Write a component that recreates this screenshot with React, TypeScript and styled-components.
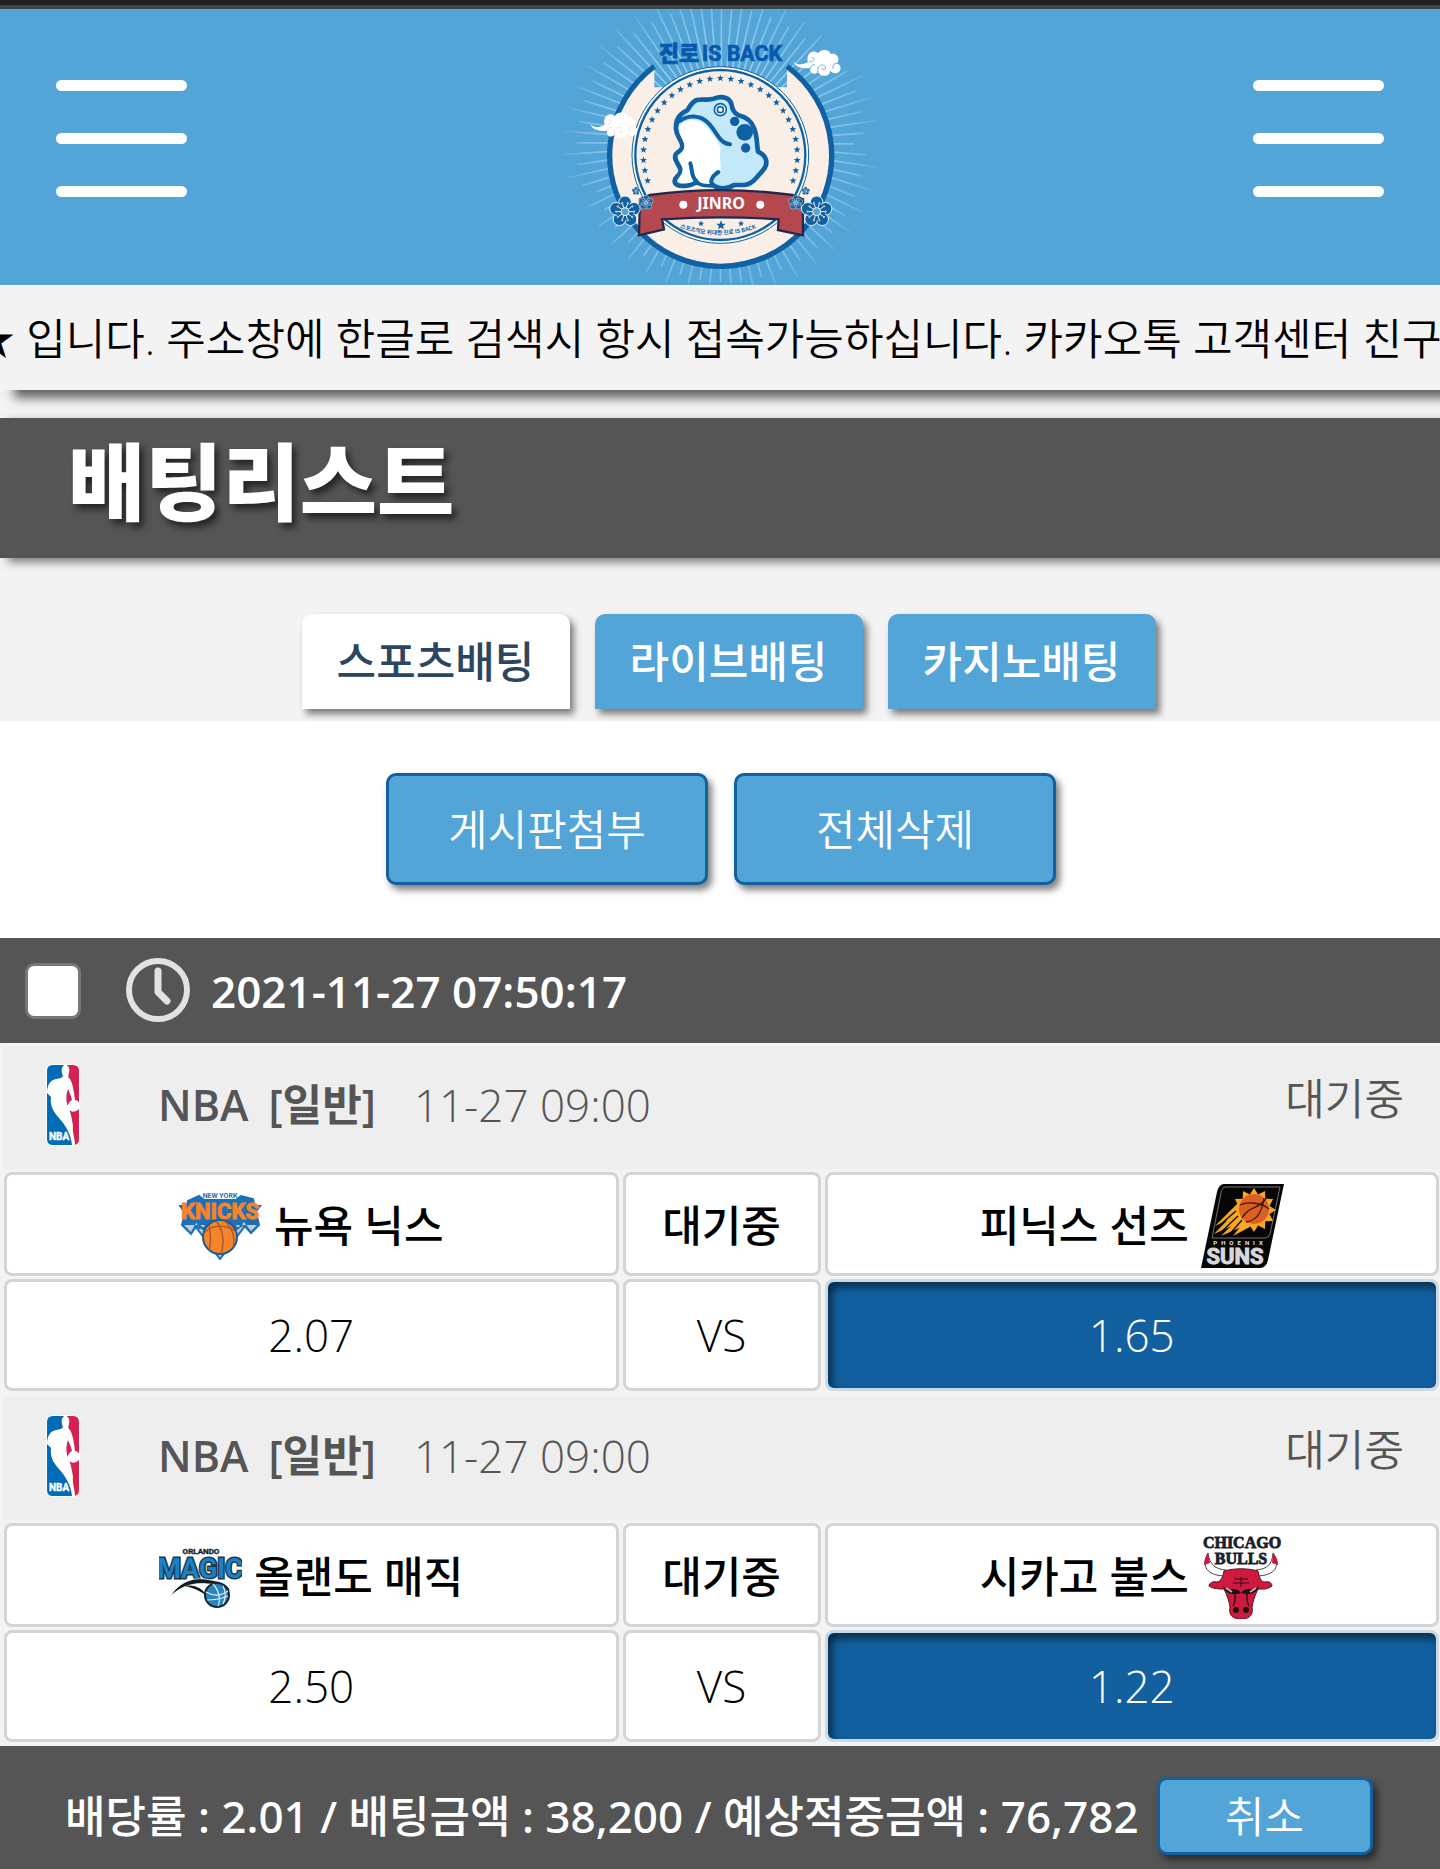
import React, { useState } from 'react';
import styled, { createGlobalStyle, css } from 'styled-components';

const color = {
  sky: '#53a4d7',
  deep: '#12609f',
  slate: '#555555',
  page: '#f3f3f3',
  row: '#eeeeee',
  line: '#d4d4d4',
};

const GlobalStyle = createGlobalStyle`
  *, *::before, *::after { box-sizing: border-box; }
  body {
    margin: 0;
    background: ${color.page};
    color: #000;
    font-family: 'Open Sans', 'Noto Sans CJK KR', sans-serif;
    font-size: 43px;
    font-weight: 350;
    line-height: 64px;
  }
  button, input { font: inherit; }
`;

const raised = css`
  box-shadow: 4px 5px 7px rgba(0, 0, 0, 0.5);
`;

/* ---------- header ---------- */

const StatusStrip = styled.div`
  height: 9px;
  background: #202020;
  border-bottom: 4px solid #3f4549;
`;

const Header = styled.header`
  display: flex;
  align-items: center;
  justify-content: space-between;
  height: 276px;
  padding: 0 56px;
  background: ${color.sky};
`;

const MenuButton = styled.button`
  display: flex;
  flex-direction: column;
  gap: 42px;
  width: 131px;
  padding: 0;
  margin-bottom: 18px;
  border: 0;
  background: none;
  cursor: pointer;
`;

const MenuBar = styled.span`
  height: 11px;
  border-radius: 6px;
  background: #fff;
`;

const LogoLink = styled.a`
  display: block;
  height: 276px;
`;

/* ---------- notice and title ---------- */

const Notice = styled.div`
  height: 105px;
  background: ${color.page};
  box-shadow: 12px 10px 10px -2px rgba(0, 0, 0, 0.6);
`;

const NoticeText = styled.p`
  margin: 0;
  overflow: hidden;
  white-space: nowrap;
  text-indent: -28px;
  line-height: 108px;
`;

const TitleBar = styled.div`
  margin-top: 28px;
  padding: 0 68px;
  height: 140px;
  background: ${color.slate};
  box-shadow: 8px 4px 9px rgba(0, 0, 0, 0.5);
`;

const Title = styled.h1`
  margin: 0;
  color: #fff;
  font-family: 'Noto Sans CJK KR', sans-serif;
  font-size: 84px;
  font-weight: 900;
  line-height: 120px;
  text-shadow: 4px 5px 7px rgba(0, 0, 0, 0.6);
`;

/* ---------- tabs and actions ---------- */

const Tabs = styled.nav`
  display: flex;
  justify-content: center;
  gap: 25px;
  padding: 56px 0 12px 17px;
`;

const Tab = styled.button<{ $active: boolean }>`
  width: 268px;
  height: 95px;
  padding: 0;
  border: 0;
  border-radius: 10px 10px 0 0;
  background: ${(p) => (p.$active ? '#fff' : color.sky)};
  color: ${(p) => (p.$active ? '#2c4560' : '#fff')};
  font-weight: 500;
  cursor: pointer;
  ${raised}
`;

const Actions = styled.div`
  display: flex;
  justify-content: center;
  gap: 26px;
  padding: 52px 0 53px 2px;
  background: #fff;
`;

const ActionButton = styled.button<{ $compact?: boolean }>`
  width: ${(p) => (p.$compact ? 216 : 322)}px;
  height: ${(p) => (p.$compact ? 78 : 112)}px;
  padding: 2px 0 0;
  border: 3px solid ${color.deep};
  border-radius: 10px;
  background: ${color.sky};
  color: #fff;
  cursor: pointer;
  ${raised}
`;

/* ---------- bet slip ---------- */

const SlipHeader = styled.div`
  display: flex;
  align-items: center;
  height: 105px;
  padding-left: 25px;
  background: ${color.slate};
  color: #fff;
`;

const Check = styled.input`
  appearance: none;
  width: 56px;
  height: 56px;
  margin: 0 45px 0 0;
  border: 3px solid #777;
  border-radius: 9px;
  background: #fff;
  &:checked { background: ${color.sky}; }
`;

const SlipTime = styled.label`
  display: flex;
  align-items: center;
  gap: 19px;
  font-size: 44px;
  font-weight: 600;
`;

const LeagueRow = styled.div`
  display: flex;
  align-items: center;
  margin: 3px 0 0 3px;
  padding: 18px 36px 23px 43px;
  background: ${color.row};
  color: ${color.slate};
`;

const LeagueName = styled.strong`
  margin-left: 78px;
  font-weight: 600;
`;

const LeagueKind = styled.strong`
  margin-left: 20px;
  font-weight: 600;
`;

const LeagueTime = styled.time`
  margin-left: 38px;
  font-size: 44px;
`;

const LeagueStatus = styled.span`
  align-self: flex-start;
  margin-left: auto;
  line-height: 70px;
`;

const OddsTable = styled.table`
  width: calc(100% + 3px);
  table-layout: fixed;
  border-collapse: separate;
  border-spacing: 4px 3px;
`;

const cell = css`
  padding: 0;
  border: 3px solid ${color.line};
  border-radius: 8px;
  background: #fff;
  text-align: center;
`;

const TeamCell = styled.th<{ $middle?: boolean }>`
  ${cell}
  width: ${(p) => (p.$middle ? '198px' : 'auto')};
  height: 104px;
  padding-top: 3px;
  font-weight: 500;
`;

const Team = styled.span`
  display: flex;
  align-items: center;
  justify-content: center;
  gap: 12px;
`;

const OddsCell = styled.td<{ $picked?: boolean }>`
  ${cell}
  height: 112px;
  font-size: 44px;
  ${(p) =>
    p.$picked &&
    css`
      border-color: #cbd9e4;
      background: ${color.deep};
      background-clip: padding-box;
      color: #fff;
      box-shadow: inset 4px 5px 8px rgba(0, 0, 0, 0.55);
    `}
`;

const SlipFooter = styled.footer`
  display: flex;
  align-items: center;
  gap: 18px;
  margin-top: 1px;
  height: 140px;
  padding-left: 65px;
  background: ${color.slate};
  color: #fff;
`;

const Summary = styled.p`
  margin: 0;
  font-family: 'Noto Sans', 'Noto Sans CJK KR', sans-serif;
  font-size: 44px;
  font-weight: 500;
  white-space: nowrap;
`;

const Screen = styled.div`
  overflow: hidden;
`;

/* ---------- drawings ---------- */

const INK = '#1060a4';
const block = "Roboto, 'Liberation Sans', sans-serif";

const starPoints = (cx: number, cy: number, r: number) =>
  Array.from({ length: 10 }, (_, i) => {
    const a = (-90 + i * 36) * (Math.PI / 180);
    const d = i % 2 ? r * 0.42 : r;
    return `${(cx + d * Math.cos(a)).toFixed(1)},${(cy + d * Math.sin(a)).toFixed(1)}`;
  }).join(' ');

function Flower({ x, y, r }: { x: number; y: number; r: number }) {
  const spots = [0, 1, 2, 3, 4].map((i) => (-90 + i * 72) * (Math.PI / 180));
  return (
    <g transform={`translate(${x} ${y}) scale(${r / 45})`}>
      {spots.map((a, i) => (
        <circle key={i} cx={28 * Math.cos(a)} cy={28 * Math.sin(a)} r="19" fill={INK} stroke="#e9f4fb" strokeWidth="3" />
      ))}
      <circle r="26" fill={INK} />
      {Array.from({ length: 10 }, (_, i) => i * 36 * (Math.PI / 180)).map((a, i) => (
        <g key={i} stroke="#f5f3ee" strokeWidth="3">
          <line x1={10 * Math.cos(a)} y1={10 * Math.sin(a)} x2={25 * Math.cos(a)} y2={25 * Math.sin(a)} />
          <circle cx={27 * Math.cos(a)} cy={27 * Math.sin(a)} r="2" />
        </g>
      ))}
      <circle r="12" fill={color.sky} stroke="#f5f3ee" strokeWidth="3" />
    </g>
  );
}

function Cloud({ x, y, swirl }: { x: number; y: number; swirl: string }) {
  return (
    <g transform={`translate(${x} ${y})`}>
      <path
        fill="#fff"
        d="M0 30 C12 46 30 42 46 34 C38 8 62 -6 76 8 C86 -8 112 -4 114 10 C136 6 144 28 132 38 C150 44 146 66 130 68 C122 68 116 64 112 60 C112 80 84 80 76 64 C64 76 48 66 54 52 C36 54 12 54 0 30 Z"
      />
      <g fill="none" stroke={swirl} strokeWidth="2.5" strokeLinecap="round">
        <path d="M50 34 C64 36 70 20 58 20" />
        <path d="M76 64 C70 46 90 36 98 48 C102 58 88 62 88 52" />
        <path d="M132 38 C122 38 118 46 122 54" />
        <path d="M66 42 C58 42 54 46 54 52" />
      </g>
    </g>
  );
}

function JinroLogo() {
  return (
    <svg width="360" height="276" viewBox="0 27 1080 828" role="img" aria-label="진로 IS BACK">
      <defs>
        <radialGradient id="rayFade" gradientUnits="userSpaceOnUse" cx="543" cy="430" r="478">
          <stop offset="0.6" stopColor="#a5d3f0" stopOpacity="0.8" />
          <stop offset="0.85" stopColor="#a5d3f0" stopOpacity="0.5" />
          <stop offset="1" stopColor="#a5d3f0" stopOpacity="0.1" />
        </radialGradient>
        <path id="mottoArc" d="M420 683 Q543 728 668 678" />
      </defs>
      <g stroke="url(#rayFade)">
        {Array.from({ length: 84 }, (_, i) => {
          const a = (i * (360 / 84) + 0.2) * (Math.PI / 180);
          const reach = 400 + ((i * 37) % 76);
          return (
            <line
              key={i}
              x1={543 + 190 * Math.cos(a)}
              y1={430 + 190 * Math.sin(a)}
              x2={543 + reach * Math.cos(a)}
              y2={430 + reach * Math.sin(a)}
              strokeWidth="5"
            />
          );
        })}
      </g>
      <path
        d="M343 199 A333 333 0 1 0 741 199 L741 262 L706 262 A265 265 0 0 0 376 262 L343 262 Z"
        fill="#faefe6"
      />
      <path d="M343 199 A333 333 0 1 0 741 199" fill="none" stroke={INK} strokeWidth="16" />
      <circle cx="541" cy="465" r="265" fill="#fff" stroke={INK} strokeWidth="3" />
      <circle cx="541" cy="465" r="255" fill="#faefe6" stroke={INK} strokeWidth="7" />
      <g fill="#0759ae" stroke="#0759ae" strokeWidth="2">
        <text x="356" y="184" fontFamily="'Noto Sans CJK KR', sans-serif" fontWeight="900" fontSize="66">진로</text>
        <text x="486" y="182" fontFamily={block} fontWeight="700" fontSize="64">IS BACK</text>
      </g>
      {Array.from({ length: 29 }, (_, i) => {
        const a = (-90 + (i - 14) * 7.8) * (Math.PI / 180);
        return <polygon key={i} fill={INK} points={starPoints(541 + 231 * Math.cos(a), 466 + 231 * Math.sin(a), 11)} />;
      })}
      <path
        d="M408 388 C406 358 420 340 442 331 C450 318 456 305 470 300 C488 296 506 302 522 296 C545 286 570 292 575 314 C576 328 584 340 596 346 C622 352 636 366 643 386 C652 410 650 432 654 455 C682 468 686 492 668 512 C650 532 636 554 612 555 L582 555 C566 566 536 570 520 556 C504 556 490 556 478 550 C466 542 456 558 440 557 C420 560 398 556 406 536 C412 526 426 522 420 504 C412 488 400 476 408 462 C416 452 430 452 426 432 C420 414 410 408 408 388 Z"
        fill="#c3e8fa"
        stroke={INK}
        strokeWidth="14"
        strokeLinejoin="round"
      />
      <path
        d="M418 378 C440 352 476 354 500 382 C520 406 538 428 542 446 C536 466 544 492 542 514 C522 524 514 538 510 552 C490 552 478 548 468 536 C456 552 436 552 414 546 C412 530 430 526 428 504 C422 486 410 476 414 466 C428 458 436 448 432 430 C426 412 416 402 418 378 Z"
        fill="#fff"
      />
      <g fill="none" stroke={INK} strokeWidth="12" strokeLinecap="round">
        <path d="M414 366 C444 342 482 344 506 370 C532 398 540 432 570 433" />
        <path d="M451 490 C458 510 452 530 470 544" />
        <path d="M535 516 C514 530 508 546 520 556" />
      </g>
      <circle cx="541" cy="329" r="18" fill="#fff" stroke={INK} strokeWidth="5" />
      <circle cx="541" cy="329" r="9" fill="none" stroke={INK} strokeWidth="5" />
      <g fill={INK}>
        <circle cx="584" cy="364" r="14" />
        <circle cx="614" cy="397" r="25" />
        <circle cx="617" cy="444" r="14" />
      </g>
      <path
        d="M300 598 L330 585 Q543 556 757 585 L789 598 L789 706 L714 690 L716 658 Q543 646 366 658 L372 688 L297 706 Z"
        fill="#b5484f"
        stroke="#1f2b4d"
        strokeWidth="7"
      />
      <circle cx="430" cy="614" r="12" fill="#fff" />
      <circle cx="661" cy="614" r="12" fill="#fff" />
      <text x="543" y="628" textAnchor="middle" fill="#fff" fontFamily="'Noto Sans', sans-serif" fontWeight="700" fontSize="48">JINRO</text>
      <g fill={INK}>
        <polygon points={starPoints(483, 671, 10)} />
        <polygon points={starPoints(543, 676, 15)} />
        <polygon points={starPoints(603, 671, 10)} />
      </g>
      <text fill={INK} fontFamily="'Noto Sans CJK KR', sans-serif" fontWeight="700" fontSize="17">
        <textPath href="#mottoArc">스포츠의모 위대한 진로 IS BACK</textPath>
      </text>
      <Cloud x={148} y={340} swirl="#f0dccb" />
      <Cloud x={758} y={152} swirl={color.sky} />
      <Flower x={255} y={635} r={45} />
      <Flower x={830} y={635} r={45} />
      <Flower x={318} y={608} r={21} />
      <Flower x={767} y={608} r={21} />
      <Flower x={288} y={573} r={12} />
      <Flower x={797} y={573} r={12} />
    </svg>
  );
}

function ClockIcon() {
  return (
    <svg width="66" height="66" viewBox="0 0 66 66" fill="none" stroke="#e2e2e2" aria-hidden="true">
      <circle cx="32" cy="32" r="29" strokeWidth="6" />
      <path d="M32 13 V34 L41 43" strokeWidth="7" strokeLinecap="round" strokeLinejoin="round" />
    </svg>
  );
}

function NbaLogo() {
  return (
    <svg width="34" height="82" viewBox="0 0 34 82" role="img" aria-label="NBA">
      <rect width="34" height="82" rx="7" fill="#fff" />
      <path d="M7 1 H18 L28 81 H7 Q1 81 1 75 V7 Q1 1 7 1 Z" fill="#006bb6" />
      <path d="M21 1 H27 Q33 1 33 7 V75 Q33 81 27 81 H28 L20 40 Z" fill="#d4214f" />
      <path
        fill="#fff"
        d="M19 1 C23 1 24 5 23 9 C22 12 22 14 24 15 C27 20 28 28 29 36 C32 36 34 39 34 43 C32 48 25 50 22 44 C21 40 24 37 26 36 C25 31 23 28 22 25 C20 30 20 35 21 40 C24 46 26 54 27 62 C26 68 29 74 29 81 L26 81 C25 70 20 62 13 54 C7 47 4 42 5 33 L1 29 C1 23 3 18 7 16 C11 14 16 15 17 12 C15 8 15 2 19 1 Z"
      />
      <text x="3" y="76" fill="#fff" stroke="#fff" strokeWidth="0.4" fontFamily={block} fontWeight="700" fontSize="10">NBA</text>
    </svg>
  );
}

function KnicksLogo() {
  return (
    <svg width="83" height="69" viewBox="0 0 83 69" role="img" aria-label="New York Knicks">
      <path d="M1 15 H81 L41 68 Z" fill="#bcc6ce" stroke="#1d70b5" strokeWidth="2" />
      <path d="M3 34 L12 43 L18 34 L24 38 L58 38 L64 33 L72 42 L80 34 L74 8 L62 5 L57 9 H25 L20 5 L9 10 Z" fill="#1d70b5" stroke="#1d70b5" strokeWidth="2" />
      <path d="M5 34 L12 41 L17 32 L24 36 L60 36 L65 31 L72 40 L78 34 Z" fill="#c3ccd3" />
      <path d="M20 31 V38 M27 31 V38 M56 31 V38 M62 31 V36" stroke="#1d70b5" strokeWidth="3" />
      <text x="41" y="7" textAnchor="middle" fill="#1d70b5" fontFamily={block} fontWeight="700" fontSize="7">NEW YORK</text>
      <text
        x="41"
        y="28"
        textAnchor="middle"
        fill="#f5842a"
        stroke="#f5842a"
        strokeWidth="1"
        fontFamily={block}
        fontWeight="700"
        fontSize="22"
      >
        KNICKS
      </text>
      <circle cx="41" cy="46" r="17" fill="#f5842a" stroke="#1c5c96" strokeWidth="2" />
      <g fill="none" stroke="#a5572a" strokeWidth="1.3">
        <path d="M25 42 C34 33 48 33 57 41" />
        <path d="M37 30 C44 38 46 52 42 63" />
        <path d="M30 34 C32 46 32 54 30 59" />
        <path d="M46 30 C54 38 56 48 54 57" />
      </g>
    </svg>
  );
}

function SunsLogo() {
  const spikes = Array.from({ length: 24 }, (_, i) => {
    const a = i * 15 * (Math.PI / 180);
    const d = i % 2 ? 16 : 22;
    return `${(53 + d * Math.cos(a)).toFixed(1)},${(26 + d * Math.sin(a)).toFixed(1)}`;
  }).join(' ');
  return (
    <svg width="83" height="84" viewBox="0 0 83 84" role="img" aria-label="Phoenix Suns">
      <path d="M23 0 H83 L67 76 Q65 84 59 84 H0 L16 8 Q18 0 23 0 Z" fill="#060606" />
      <path d="M25 3 H79 L69 50 Q68 54 64 54 H11 L20 9 Q21 3 25 3 Z" fill="none" stroke="#6c7073" strokeWidth="1" />
      <polygon points={spikes} fill="#f7a723" />
      <g fill="#f7a723">
        <path d="M38 18 L14 42 L44 28 Z" />
        <path d="M38 24 L13 50 L48 34 Z" />
        <path d="M42 30 L20 52 L52 38 Z" />
        <path d="M46 34 L32 52 L58 38 Z" />
      </g>
      <path d="M35 27 L13 46 M37 32 L17 51 M41 36 L27 52" fill="none" stroke="#060606" strokeWidth="1.2" />
      <circle cx="53" cy="25" r="15" fill="#dd5f22" />
      <g fill="none" stroke="#3b1710" strokeWidth="1.3">
        <path d="M39 21 C47 17 61 19 68 25" />
        <path d="M41 34 C49 21 55 27 65 15" />
        <path d="M45 38 C55 37 61 29 63 14" />
      </g>
      <text x="39" y="61" textAnchor="middle" fill="#e8e8e8" fontFamily={block} fontWeight="700" fontSize="6" letterSpacing="4">PHOENIX</text>
      <text x="34" y="80" textAnchor="middle" fill="#d6d8da" stroke="#d6d8da" fontFamily={block} fontWeight="700" fontSize="22">SUNS</text>
    </svg>
  );
}

function MagicLogo() {
  return (
    <svg width="83" height="62" viewBox="0 0 83 62" role="img" aria-label="Orlando Magic">
      <text x="42" y="8" textAnchor="middle" fill="#16242d" stroke="#16242d" strokeWidth="0.4" fontFamily={block} fontWeight="700" fontSize="8">ORLANDO</text>
      <text
        x="41"
        y="32"
        textAnchor="middle"
        fill="#1d7fc4"
        stroke="#173a50"
        strokeWidth="3"
        paintOrder="stroke"
        fontFamily={block}
        fontWeight="700"
        fontSize="27"
      >
        MAGIC
      </text>
      <path d="M11 51 C18 38 32 31 46 33 C56 35 68 35 72 46 C64 38 56 38 49 38 C34 36 20 41 11 51 Z" fill="#111c22" stroke="#fff" strokeWidth="0.8" />
      <path d="M26 40 C36 38 44 43 48 50 C40 44 34 42 26 40 Z" fill="#111c22" />
      <circle cx="58" cy="49" r="12" fill="#2a83c2" stroke="#16242d" strokeWidth="2" />
      <g fill="none" stroke="#e3eef5" strokeWidth="1.2">
        <path d="M47 46 C54 50 62 50 69 45" />
        <path d="M48 54 C56 54 64 52 69 50" />
        <path d="M54 38 C60 44 62 54 59 60" />
        <path d="M64 40 C67 46 67 52 64 58" />
      </g>
    </svg>
  );
}

function BullsLogo() {
  return (
    <svg width="83" height="84" viewBox="0 0 83 84" role="img" aria-label="Chicago Bulls">
      <path d="M7 18 C0 32 6 40 23 41 L25 35 C14 34 9 30 7 18 Z" fill="#fff" stroke="#333" strokeWidth="0.9" />
      <path d="M72 18 C80 32 74 40 57 41 L55 35 C66 34 71 30 72 18 Z" fill="#fff" stroke="#333" strokeWidth="0.9" />
      <path d="M7 18 C4 22 3 26 3 30 L9 28 Z M72 18 C76 22 77 26 77 30 L71 28 Z" fill="#c8193c" />
      <g fill="#17212a" stroke="#17212a" strokeWidth="0.8" fontFamily="'Liberation Serif', serif" fontWeight="700" fontSize="16">
        <text x="41" y="13" textAnchor="middle">CHICAGO</text>
        <text x="40" y="29" textAnchor="middle">BULLS</text>
      </g>
      <path
        d="M23 36 C34 33 46 33 57 36 C58 42 60 47 64 47 C68 46 71 48 71 51 C66 55 60 54 57 54 C54 60 52 66 51 72 C53 82 46 84 40 84 C34 84 27 82 29 72 C28 66 26 60 23 54 C18 54 12 54 8 51 C8 48 12 46 16 47 C20 46 22 42 23 36 Z"
        fill="#cf1a3f"
        stroke="#5c1122"
        strokeWidth="1"
      />
      <g fill="none" stroke="#2a1216" strokeWidth="1.5">
        <path d="M33 44 H47 M32 48 H48 M40 42 V52" strokeWidth="1" />
        <path d="M33 55 C35 62 35 66 32 71 M47 55 C45 62 45 66 48 71" />
      </g>
      <path d="M22 51 C28 58 34 50 40 58 C46 50 52 58 58 51 C56 60 46 60 40 58 C34 60 24 60 22 51 Z" fill="#1c1315" />
      <path d="M25 53 L31 57 M55 53 L49 57" stroke="#b9bcbe" strokeWidth="1.6" />
      <circle cx="35" cy="75" r="3" fill="#1c1315" />
      <circle cx="45" cy="75" r="3" fill="#1c1315" />
    </svg>
  );
}

/* ---------- data ---------- */

const tabs = ['스포츠배팅', '라이브배팅', '카지노배팅'];

const games = [
  { home: '뉴욕 닉스', HomeLogo: KnicksLogo, away: '피닉스 선즈', AwayLogo: SunsLogo, homeOdds: '2.07', awayOdds: '1.65' },
  { home: '올랜도 매직', HomeLogo: MagicLogo, away: '시카고 불스', AwayLogo: BullsLogo, homeOdds: '2.50', awayOdds: '1.22' },
];

function Menu({ label }: { label: string }) {
  return (
    <MenuButton type="button" aria-label={label}>
      <MenuBar />
      <MenuBar />
      <MenuBar />
    </MenuButton>
  );
}

export default function App() {
  const [active, setActive] = useState(0);
  return (
    <Screen>
      <GlobalStyle />
      <StatusStrip />
      <Header>
        <Menu label="메뉴" />
        <LogoLink href="#home">
          <JinroLogo />
        </LogoLink>
        <Menu label="내 정보" />
      </Header>
      <Notice>
        <NoticeText>★ 입니다. 주소창에 한글로 검색시 항시 접속가능하십니다. 카카오톡 고객센터 친구</NoticeText>
      </Notice>
      <TitleBar>
        <Title>배팅리스트</Title>
      </TitleBar>
      <Tabs>
        {tabs.map((name, i) => (
          <Tab key={name} type="button" $active={i === active} aria-pressed={i === active} onClick={() => setActive(i)}>
            {name}
          </Tab>
        ))}
      </Tabs>
      <Actions>
        <ActionButton type="button">게시판첨부</ActionButton>
        <ActionButton type="button">전체삭제</ActionButton>
      </Actions>
      <main>
        <SlipHeader>
          <Check type="checkbox" id="slip" />
          <SlipTime htmlFor="slip">
            <ClockIcon />
            2021-11-27 07:50:17
          </SlipTime>
        </SlipHeader>
        {games.map(({ home, HomeLogo, away, AwayLogo, homeOdds, awayOdds }) => (
          <section key={home}>
            <LeagueRow>
              <NbaLogo />
              <LeagueName>NBA</LeagueName>
              <LeagueKind>[일반]</LeagueKind>
              <LeagueTime>11-27 09:00</LeagueTime>
              <LeagueStatus>대기중</LeagueStatus>
            </LeagueRow>
            <OddsTable>
              <thead>
                <tr>
                  <TeamCell scope="col">
                    <Team>
                      <HomeLogo />
                      {home}
                    </Team>
                  </TeamCell>
                  <TeamCell scope="col" $middle>
                    대기중
                  </TeamCell>
                  <TeamCell scope="col">
                    <Team>
                      {away}
                      <AwayLogo />
                    </Team>
                  </TeamCell>
                </tr>
              </thead>
              <tbody>
                <tr>
                  <OddsCell>{homeOdds}</OddsCell>
                  <OddsCell>VS</OddsCell>
                  <OddsCell $picked>{awayOdds}</OddsCell>
                </tr>
              </tbody>
            </OddsTable>
          </section>
        ))}
        <SlipFooter>
          <Summary>배당률 : 2.01 / 배팅금액 : 38,200 / 예상적중금액 : 76,782</Summary>
          <ActionButton type="button" $compact>
            취소
          </ActionButton>
        </SlipFooter>
      </main>
    </Screen>
  );
}
